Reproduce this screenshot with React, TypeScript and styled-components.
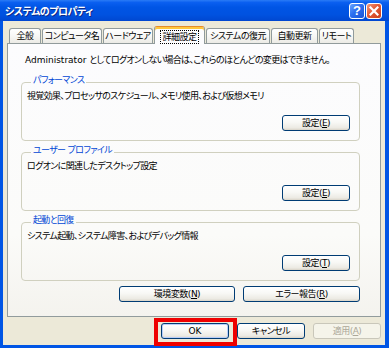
import React from "react";
import styled, { createGlobalStyle } from "styled-components";

const Global = createGlobalStyle`
  html, body { margin: 0; padding: 0; background: #ffffff; }
  body { font-family: "DejaVu Sans", "Noto Sans CJK JP", sans-serif; }
`;

const Window = styled.div`
  width: 389px;
  height: 348px;
  display: flex;
  flex-direction: column;
  overflow: hidden;
  font-family: "DejaVu Sans", "Noto Sans CJK JP", sans-serif;
  font-size: 9px;
  letter-spacing: -0.65px;
  font-feature-settings: "palt";
  color: #000;
`;

const Latin = styled.span`
  letter-spacing: 0;
`;

const TitleBar = styled.div`
  height: 21px;
  flex: none;
  display: flex;
  align-items: center;
  gap: 1px;
  padding: 0 7px 0 5px;
  background: linear-gradient(
    180deg,
    #2a7bf6 0%,
    #0a5ff0 12%,
    #0055e5 35%,
    #0052e0 70%,
    #0047d0 100%
  );
`;

const Title = styled.div`
  flex: 1;
  color: #fff;
  font-family: "Noto Sans CJK JP", sans-serif;
  font-weight: bold;
  font-size: 10px;
  letter-spacing: -0.5px;
  line-height: 14px;
  text-shadow: 1px 1px 0 #0a2a8a;
`;

const CaptionButton = styled.div<{ $kind: "help" | "close" }>`
  box-sizing: border-box;
  width: 16px;
  height: 16px;
  border: 1px solid #fff;
  border-radius: 3px;
  display: flex;
  align-items: center;
  justify-content: center;
  color: #fff;
  font-family: "Liberation Sans", Arial, sans-serif;
  font-weight: bold;
  font-size: 13px;
  letter-spacing: 0;
  line-height: 1;
  background: ${(p) =>
    p.$kind === "close"
      ? "linear-gradient(135deg, #f39a7c 0%, #e35a35 45%, #c8401c 100%)"
      : "linear-gradient(135deg, #6aa4ff 0%, #2d6ff0 45%, #1a54d4 100%)"};
`;

const Body = styled.div`
  flex: 1;
  display: flex;
  flex-direction: column;
  background: #ece9d8;
  border-style: solid;
  border-color: #0055e5;
  border-width: 0 4px 3px 3px;
  padding: 5px 4px 0 4px;
`;

const TabRow = styled.div`
  height: 17px;
  display: flex;
  align-items: flex-end;
  gap: 1px;
  padding-left: 2px;
`;

const Tab = styled.div<{ $w: number; $active?: boolean }>`
  box-sizing: border-box;
  position: relative;
  z-index: ${(p) => (p.$active ? 2 : 1)};
  width: ${(p) => p.$w}px;
  height: ${(p) => (p.$active ? 18 : 15)}px;
  margin-bottom: ${(p) => (p.$active ? -1 : 0)}px;
  display: flex;
  align-items: center;
  justify-content: center;
  border: 1px solid #919b9c;
  border-bottom: none;
  border-radius: 3px 3px 0 0;
  line-height: 12px;
  letter-spacing: -0.5px;
  white-space: nowrap;
  background: ${(p) =>
    p.$active
      ? "#fcfcfe"
      : "linear-gradient(180deg, #ffffff 0%, #f7f7f5 50%, #ecebe6 100%)"};
  ${(p) =>
    p.$active
      ? "border-top: 1px solid #e68b2c; box-shadow: inset 0 2px 0 #ffc83c; padding-top: 2px;"
      : ""}
`;

const Focus = styled.span`
  outline: 1px dotted #000;
  padding: 0 1px;
  line-height: 12px;
`;

const Panel = styled.div`
  box-sizing: border-box;
  height: 274px;
  flex: none;
  display: flex;
  flex-direction: column;
  border: 1px solid #919b9c;
  padding: 10px 20px 14px 13px;
  background: linear-gradient(180deg, #fcfcfe 0%, #fbfbf9 70%, #f4f3ee 100%);
`;

const Line = styled.div`
  line-height: 12px;
  white-space: nowrap;
`;

const Intro = styled(Line)`
  padding-left: 4px;
  margin-bottom: 8px;
`;

const Group = styled.fieldset`
  margin: 0 0 3px 0;
  min-width: 0;
  flex: none;
  padding: 0 9px 9px 5px;
  border: 1px solid #d0d0bf;
  border-radius: 4px;
  display: flex;
  flex-direction: column;
`;

const Legend = styled.legend`
  color: #0046d5;
  line-height: 12px;
  padding: 0 2px 4px 2px;
  margin-left: 4px;
`;

const RightRow = styled.div<{ $gap?: number; $top?: number }>`
  display: flex;
  justify-content: flex-end;
  gap: ${(p) => p.$gap ?? 8}px;
  margin-top: ${(p) => p.$top ?? 0}px;
`;

const Button = styled.button<{ $w: number; $default?: boolean }>`
  box-sizing: border-box;
  width: ${(p) => p.$w}px;
  height: 16px;
  padding: 0;
  font: inherit;
  font-size: 9px;
  letter-spacing: -0.5px;
  line-height: 13px;
  color: #000;
  border: 1px solid #003c74;
  border-radius: 3px;
  background: linear-gradient(
    180deg,
    #ffffff 0%,
    #f8f8f5 45%,
    #eceae3 85%,
    #d8d3c7 100%
  );
  box-shadow: ${(p) => (p.$default ? "inset 0 0 0 1px #b9cef8" : "none")};
  &:disabled {
    border-color: #c9c7ba;
    background: #f5f4ea;
    color: #aca899;
  }
  u {
    text-decoration: underline;
  }
`;

const Marked = styled.span`
  position: relative;
  display: flex;
  &::after {
    content: "";
    position: absolute;
    top: -5px;
    bottom: -7px;
    left: -7px;
    right: -8px;
    border: 4px solid #ee0000;
    pointer-events: none;
  }
`;

const DialogButtons = styled(RightRow)`
  margin-top: 6px;
`;

const tabs: { label: string; w: number; active?: boolean }[] = [
  { label: "全般", w: 32 },
  { label: "コンピュータ名", w: 60 },
  { label: "ハードウェア", w: 50 },
  { label: "詳細設定", w: 51, active: true },
  { label: "システムの復元", w: 64 },
  { label: "自動更新", w: 47 },
  { label: "リモート", w: 35 },
];

const groups = [
  {
    title: "パフォーマンス",
    text: "視覚効果、プロセッサのスケジュール、メモリ使用、および仮想メモリ",
    key: "E",
  },
  {
    title: "ユーザー プロファイル",
    text: "ログオンに関連したデスクトップ設定",
    key: "E",
  },
  {
    title: "起動と回復",
    text: "システム起動、システム障害、およびデバッグ情報",
    key: "T",
  },
];

export default function App() {
  return (
    <>
      <Global />
      <Window>
        <TitleBar>
          <Title>システムのプロパティ</Title>
          <CaptionButton $kind="help">?</CaptionButton>
          <CaptionButton $kind="close">
            <svg width="10" height="10" viewBox="0 0 10 10">
              <path
                d="M1.5 1.5 L8.5 8.5 M8.5 1.5 L1.5 8.5"
                stroke="#fff"
                strokeWidth="2.2"
                strokeLinecap="square"
              />
            </svg>
          </CaptionButton>
        </TitleBar>
        <Body>
          <TabRow>
            {tabs.map((t) => (
              <Tab key={t.label} $w={t.w} $active={t.active}>
                {t.active ? <Focus>{t.label}</Focus> : t.label}
              </Tab>
            ))}
          </TabRow>
          <Panel>
            <Intro>
              <Latin>Administrator </Latin>
              としてログオンしない場合は、これらのほとんどの変更はできません。
            </Intro>
            {groups.map((g) => (
              <Group key={g.title}>
                <Legend>{g.title}</Legend>
                <Line>{g.text}</Line>
                <RightRow $top={13}>
                  <Button $w={68}>
                    設定(<u>{g.key}</u>)
                  </Button>
                </RightRow>
              </Group>
            ))}
            <RightRow $top={2}>
              <Button $w={116}>
                環境変数(<u>N</u>)
              </Button>
              <Button $w={117}>
                エラー報告(<u>R</u>)
              </Button>
            </RightRow>
          </Panel>
          <DialogButtons>
            <Marked>
              <Button $w={68} $default>
                <Latin>OK</Latin>
              </Button>
            </Marked>
            <Button $w={68}>キャンセル</Button>
            <Button $w={68} disabled>
              適用(<u>A</u>)
            </Button>
          </DialogButtons>
        </Body>
      </Window>
    </>
  );
}
